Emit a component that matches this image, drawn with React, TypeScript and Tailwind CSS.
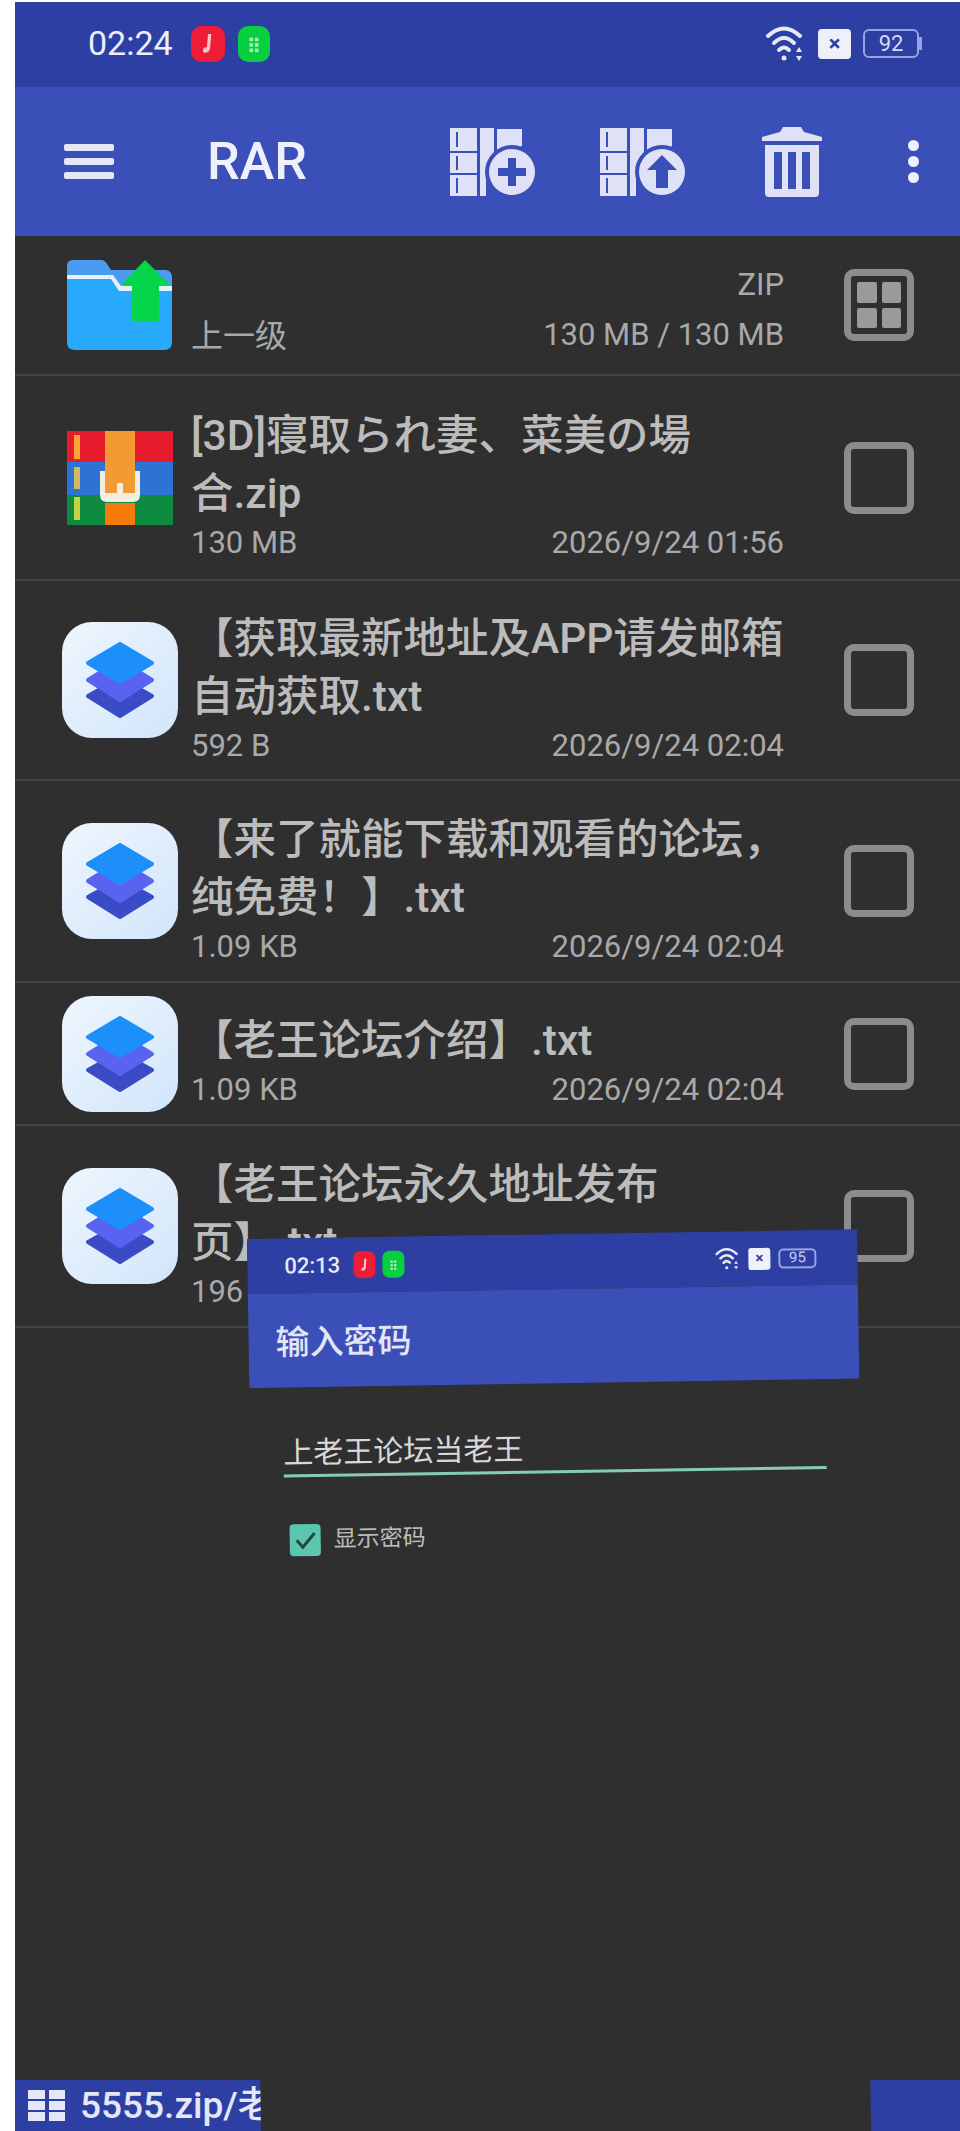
import type { ReactNode } from "react";

const FONT = "font-['Roboto','Noto_Sans_CJK_SC',sans-serif]";

function ArchiveIcon({ children }: { children: ReactNode }) {
  return (
    <svg width="86" height="68" viewBox="0 0 86 68" className="shrink-0">
      <g fill="#dfe2f6">
        <rect x="0" y="0" width="27" height="23" />
        <rect x="0" y="25" width="27" height="20" />
        <rect x="0" y="47" width="27" height="21" />
        <path d="M30 0 L44 0 L44 34 L36 36 L36 68 L30 68 Z" />
        <path d="M47 1 L72 1 L72 18 L47 30 Z" />
      </g>
      <g fill="#3a50b8">
        <rect x="6" y="4" width="2" height="15" />
        <rect x="6" y="28" width="2" height="14" />
        <rect x="6" y="50" width="2" height="15" />
      </g>
      <circle cx="62" cy="44" r="27" fill="#3a50b8" />
      <circle cx="62" cy="44" r="23" fill="#dfe2f6" />
      {children}
    </svg>
  );
}

function TrashIcon() {
  return (
    <svg width="60" height="70" viewBox="0 0 60 70" className="shrink-0">
      <path d="M0 10 L18 5 L21 0 L39 0 L42 5 L60 10 L60 14 L0 14 Z" fill="#dfe2f6" />
      <path d="M3 18 L57 18 L57 66 Q57 70 53 70 L7 70 Q3 70 3 66 Z" fill="#dfe2f6" />
      <rect x="12" y="25" width="8" height="37" fill="#3a50b8" />
      <rect x="26" y="25" width="8" height="37" fill="#3a50b8" />
      <rect x="40" y="25" width="8" height="37" fill="#3a50b8" />
    </svg>
  );
}

function WifiIcon({ size }: { size: number }) {
  return (
    <svg width={size} height={size} viewBox="0 0 40 40" fill="none" stroke="#e6e9f8" strokeWidth="4" strokeLinecap="round">
      <path d="M2 12 Q18 -3 34 12" />
      <path d="M8 19 Q18 9 28 19" />
      <path d="M13 26 Q18 21 23 26" />
      <circle cx="18" cy="34" r="2.5" fill="#e6e9f8" stroke="none" />
      <path d="M33 23 L30 28 L36 28 Z M33 37 L30 32 L36 32 Z" fill="#e6e9f8" stroke="none" />
    </svg>
  );
}

function StatusBadge({ className, children }: { className: string; children: ReactNode }) {
  return <div className={`flex items-center justify-center ${className}`}>{children}</div>;
}

// note glyph on the red notification badge
function NoteGlyph({ size }: { size: number }) {
  return (
    <svg width={size} height={size} viewBox="0 0 20 20" fill="#fbc4c4">
      <path d="M10 1 L13 1 L12 13 Q11.5 18 7 18 Q5 18 5.5 15 Q6 13 9 13 Z" />
    </svg>
  );
}

// dots on the green notification badge
function DotsGlyph({ size }: { size: number }) {
  return (
    <svg width={size} height={size} viewBox="0 0 20 20" fill="#a5f0b8">
      <rect x="5" y="3" width="4" height="4" />
      <rect x="11" y="3" width="4" height="4" />
      <rect x="5" y="9" width="4" height="4" />
      <rect x="11" y="9" width="4" height="4" />
      <rect x="5" y="15" width="4" height="4" />
      <rect x="11" y="15" width="4" height="4" />
    </svg>
  );
}

function FolderUpIcon() {
  return (
    <svg width="106" height="94" viewBox="0 0 106 94">
      <path d="M0 8 Q0 2 6 2 L34 2 Q38 2 40 6 L44 12 L98 12 Q105 12 105 20 L105 40 L0 40 Z" fill="#4b9bf3" />
      <path d="M0 17 L46 17 L54 28 L105 28 L105 40 L0 40 Z" fill="#e4f1fd" />
      <path d="M0 21 L44 21 L52 33 L105 33 L105 84 Q105 92 97 92 L8 92 Q0 92 0 84 Z" fill="#29a9fb" />
      <path d="M78 2 L103 27 L92 27 L92 62 Q92 64 90 64 L67 64 Q65 64 65 62 L65 27 L54 27 Z" fill="#04d54b" />
    </svg>
  );
}

function RarIcon() {
  return (
    <svg width="106" height="94" viewBox="0 0 106 94">
      <rect x="0" y="0" width="106" height="31" fill="#e91c2e" />
      <rect x="0" y="31" width="106" height="33" fill="#2c73d2" />
      <rect x="0" y="64" width="106" height="30" fill="#0f8a41" />
      <rect x="7" y="4" width="6" height="24" fill="#f7a534" />
      <rect x="7" y="36" width="6" height="22" fill="#d4b85f" />
      <rect x="7" y="66" width="6" height="23" fill="#c9d23f" />
      <rect x="38" y="-1" width="30" height="40" fill="#f49a33" />
      <rect x="38" y="72" width="30" height="22" fill="#f57c0a" />
      <path d="M33 40 L33 64 Q33 71 40 71 L66 71 Q73 71 73 64 L73 40 L68 40 L68 62 L38 62 L38 40 Z" fill="#f3eee4" />
      <rect x="38" y="38" width="30" height="24" fill="#f49a33" />
      <rect x="50" y="52" width="6" height="10" fill="#f3eee4" />
    </svg>
  );
}

function LayersIcon() {
  return (
    <div className="w-[116px] h-[116px] rounded-[30px] bg-gradient-to-br from-[#eef6fd] to-[#d2e5fb] flex items-center justify-center shrink-0">
      <svg width="116" height="116" viewBox="0 0 116 116">
        <path d="M58 56 L90 74 L58 94 L26 74 Z" fill="#3a4bc6" stroke="#3a4bc6" strokeWidth="4" strokeLinejoin="round" />
        <path d="M58 38 L90 58 L58 78 L26 58 Z" fill="#5a63f0" stroke="#5a63f0" strokeWidth="4" strokeLinejoin="round" />
        <path d="M58 22 L90 41 L58 60 L26 41 Z" fill="#1c8ffb" stroke="#1c8ffb" strokeWidth="4" strokeLinejoin="round" />
      </svg>
    </div>
  );
}

function Checkbox() {
  return <div className="w-[70px] h-[72px] rounded-[10px] border-[7px] border-[#8c8c8c] shrink-0" />;
}

function FileRow({
  icon,
  lines,
  size,
  date,
  rowClass,
}: {
  icon: ReactNode;
  lines: string[];
  size: string;
  date?: string;
  rowClass: string;
}) {
  return (
    <div className={`flex items-center border-b-2 border-[#444444] pr-[46px] ${rowClass}`}>
      <div className="w-[176px] flex justify-center pl-[34px] shrink-0">{icon}</div>
      <div className="flex-1 min-w-0 pt-[15px]">
        {lines.map((line) => (
          <div key={line} className="text-[42.5px] leading-[58px] font-medium text-[#bcbcbc] whitespace-nowrap">
            {line}
          </div>
        ))}
        <div className="flex justify-between text-[31px] leading-[40px] text-[#a9a9a9]">
          <span>{size}</span>
          <span>{date}</span>
        </div>
      </div>
      <div className="ml-[60px]">
        <Checkbox />
      </div>
    </div>
  );
}

function PasswordOverlay() {
  return (
    <div className="absolute left-[247px] top-[1239px] w-[610px] h-[930px] bg-[#2f2f2f] origin-top-left rotate-[-0.9deg]">
      <div className="h-[55px] bg-[#2d3fa3] flex items-center pl-[37px] pr-[41px] text-[#e6e9f8]">
        <span className="text-[22px] font-medium">02:13</span>
        <StatusBadge className="ml-[13px] w-[22px] h-[27px] rounded-[7px] bg-[#ee1c34]">
          <NoteGlyph size={14} />
        </StatusBadge>
        <StatusBadge className="ml-[7px] w-[22px] h-[27px] rounded-[7px] bg-[#07cf3f]">
          <DotsGlyph size={12} />
        </StatusBadge>
        <div className="ml-auto flex items-center gap-[8px]">
          <WifiIcon size={25} />
          <StatusBadge className="w-[22px] h-[22px] rounded-[3px] bg-[#eef0fa] text-[#2d3fa3] text-[15px] font-bold leading-none">
            ×
          </StatusBadge>
          <StatusBadge className="w-[38px] h-[20px] rounded-[5px] border-2 border-[#98a4e0] text-[#c6cdf0] text-[15px] leading-none">
            95
          </StatusBadge>
        </div>
      </div>
      <div className="h-[94px] bg-[#3a50b8] flex items-center pl-[27px] pt-[4px] text-[34px] font-medium text-[#e3e6f7]">输入密码</div>
      <div className="mt-[46px] ml-[33px] w-[543px] border-b-[3px] border-[#86cdb6] pb-[1px] text-[30px] leading-[40px] text-[#d8d8d8]">
        上老王论坛当老王
      </div>
      <div className="mt-[46px] ml-[38px] flex items-center gap-[13px]">
        <div className="w-[31px] h-[32px] rounded-[4px] bg-[#5cc5b0] flex items-center justify-center">
          <svg width="22" height="20" viewBox="0 0 22 20" fill="none" stroke="#24483f" strokeWidth="3">
            <path d="M2 10 L8 17 L20 3" />
          </svg>
        </div>
        <span className="text-[23px] text-[#bdbdbd]">显示密码</span>
      </div>
    </div>
  );
}

export default function App() {
  return (
    <div className={`relative h-[2131px] overflow-hidden bg-white pl-[15px] pt-[2px] ${FONT}`}>
      <div className="flex flex-col h-full bg-[#2f2f2f]">
        {/* status bar */}
        <div className="h-[85px] bg-[#2d3fa3] flex items-center pl-[73px] pr-[38px] pb-[2px] shrink-0">
          <span className="text-[34px] text-[#eceef9]">02:24</span>
          <StatusBadge className="ml-[18px] w-[34px] h-[36px] rounded-[10px] bg-[#ee1c34]">
            <NoteGlyph size={22} />
          </StatusBadge>
          <StatusBadge className="ml-[13px] w-[32px] h-[36px] rounded-[10px] bg-[#07cf3f]">
            <DotsGlyph size={18} />
          </StatusBadge>
          <div className="ml-auto flex items-center gap-[12px]">
            <WifiIcon size={40} />
            <StatusBadge className="w-[33px] h-[30px] rounded-[4px] bg-[#eef0fa] text-[#2d3fa3] text-[22px] font-bold leading-none">
              ×
            </StatusBadge>
            <div className="flex items-center">
              <StatusBadge className="w-[56px] h-[29px] rounded-[6px] border-2 border-[#98a4e0] text-[#d5daf4] text-[22px] leading-none">
                92
              </StatusBadge>
              <span className="w-[3px] h-[13px] bg-[#98a4e0]" />
            </div>
          </div>
        </div>

        {/* toolbar */}
        <div className="h-[149px] bg-[#3a50b8] flex items-center shrink-0">
          <div className="ml-[49px] w-[50px] flex flex-col gap-[7px]">
            <span className="h-[7px] rounded-[2px] bg-[#e4e7f8]" />
            <span className="h-[7px] rounded-[2px] bg-[#e4e7f8]" />
            <span className="h-[7px] rounded-[2px] bg-[#e4e7f8]" />
          </div>
          <span className="ml-[93px] w-[100px] text-[52px] leading-none font-medium text-[#eef0fb]">RAR</span>
          <div className="ml-[143px]">
            <ArchiveIcon>
              <path d="M58 30 L66 30 L66 40 L76 40 L76 48 L66 48 L66 58 L58 58 L58 48 L48 48 L48 40 L58 40 Z" fill="#3a50b8" />
            </ArchiveIcon>
          </div>
          <div className="ml-[64px]">
            <ArchiveIcon>
              <path d="M62 27 L77 42 L68 42 L68 60 L56 60 L56 42 L47 42 Z" fill="#3a50b8" />
            </ArchiveIcon>
          </div>
          <div className="ml-[76px]">
            <TrashIcon />
          </div>
          <div className="ml-[86px] flex flex-col gap-[5px]">
            <span className="w-[11px] h-[11px] rounded-full bg-[#eef0fb]" />
            <span className="w-[11px] h-[11px] rounded-full bg-[#eef0fb]" />
            <span className="w-[11px] h-[11px] rounded-full bg-[#eef0fb]" />
          </div>
        </div>

        {/* parent folder row */}
        <div className="h-[140px] flex items-center border-b-2 border-[#444444] pr-[46px] shrink-0">
          <div className="w-[176px] flex justify-center pl-[34px] shrink-0">
            <FolderUpIcon />
          </div>
          <div className="flex-1 flex justify-between items-end pt-[9px]">
            <span className="text-[32px] leading-[40px] text-[#a9a9a9] mb-[4px]">上一级</span>
            <div className="text-right text-[31px] leading-[50px] text-[#a9a9a9]">
              <div>ZIP</div>
              <div>130 MB / 130 MB</div>
            </div>
          </div>
          <div className="ml-[60px] w-[70px] h-[72px] rounded-[10px] border-[7px] border-[#8c8c8c] grid grid-cols-2 gap-[5px] p-[6px] shrink-0">
            <span className="rounded-[2px] bg-[#9a9a9a]" />
            <span className="rounded-[2px] bg-[#9a9a9a]" />
            <span className="rounded-[2px] bg-[#9a9a9a]" />
            <span className="rounded-[2px] bg-[#9a9a9a]" />
          </div>
        </div>

        <FileRow
          icon={<RarIcon />}
          lines={["[3D]寝取られ妻、菜美の場", "合.zip"]}
          size="130 MB"
          date="2026/9/24 01:56"
          rowClass="h-[205px] shrink-0"
        />
        <FileRow
          icon={<LayersIcon />}
          lines={["【获取最新地址及APP请发邮箱", "自动获取.txt"]}
          size="592 B"
          date="2026/9/24 02:04"
          rowClass="h-[200px] shrink-0"
        />
        <FileRow
          icon={<LayersIcon />}
          lines={["【来了就能下载和观看的论坛，", "纯免费！】.txt"]}
          size="1.09 KB"
          date="2026/9/24 02:04"
          rowClass="h-[202px] shrink-0"
        />
        <FileRow
          icon={<LayersIcon />}
          lines={["【老王论坛介绍】.txt"]}
          size="1.09 KB"
          date="2026/9/24 02:04"
          rowClass="h-[143px] shrink-0"
        />
        <FileRow
          icon={<LayersIcon />}
          lines={["【老王论坛永久地址发布", "页】.txt"]}
          size="196 B"
          rowClass="h-[202px] shrink-0"
        />

        {/* path bar */}
        <div className="mt-auto h-[51px] bg-[#2d3fa3] flex items-center shrink-0">
          <div className="ml-[13px] grid grid-cols-2 gap-x-[4px] gap-y-[2px] w-[37px]">
            <span className="h-[9px] bg-[#e4e7f8]" />
            <span className="h-[9px] bg-[#e4e7f8]" />
            <span className="h-[9px] bg-[#e4e7f8]" />
            <span className="h-[9px] bg-[#e4e7f8]" />
            <span className="h-[9px] bg-[#e4e7f8]" />
            <span className="h-[9px] bg-[#e4e7f8]" />
          </div>
          <span className="ml-[15px] text-[37px] leading-none font-medium text-[#e4e7f8] whitespace-nowrap">5555.zip/老王论坛</span>
        </div>
      </div>
      <PasswordOverlay />
    </div>
  );
}
